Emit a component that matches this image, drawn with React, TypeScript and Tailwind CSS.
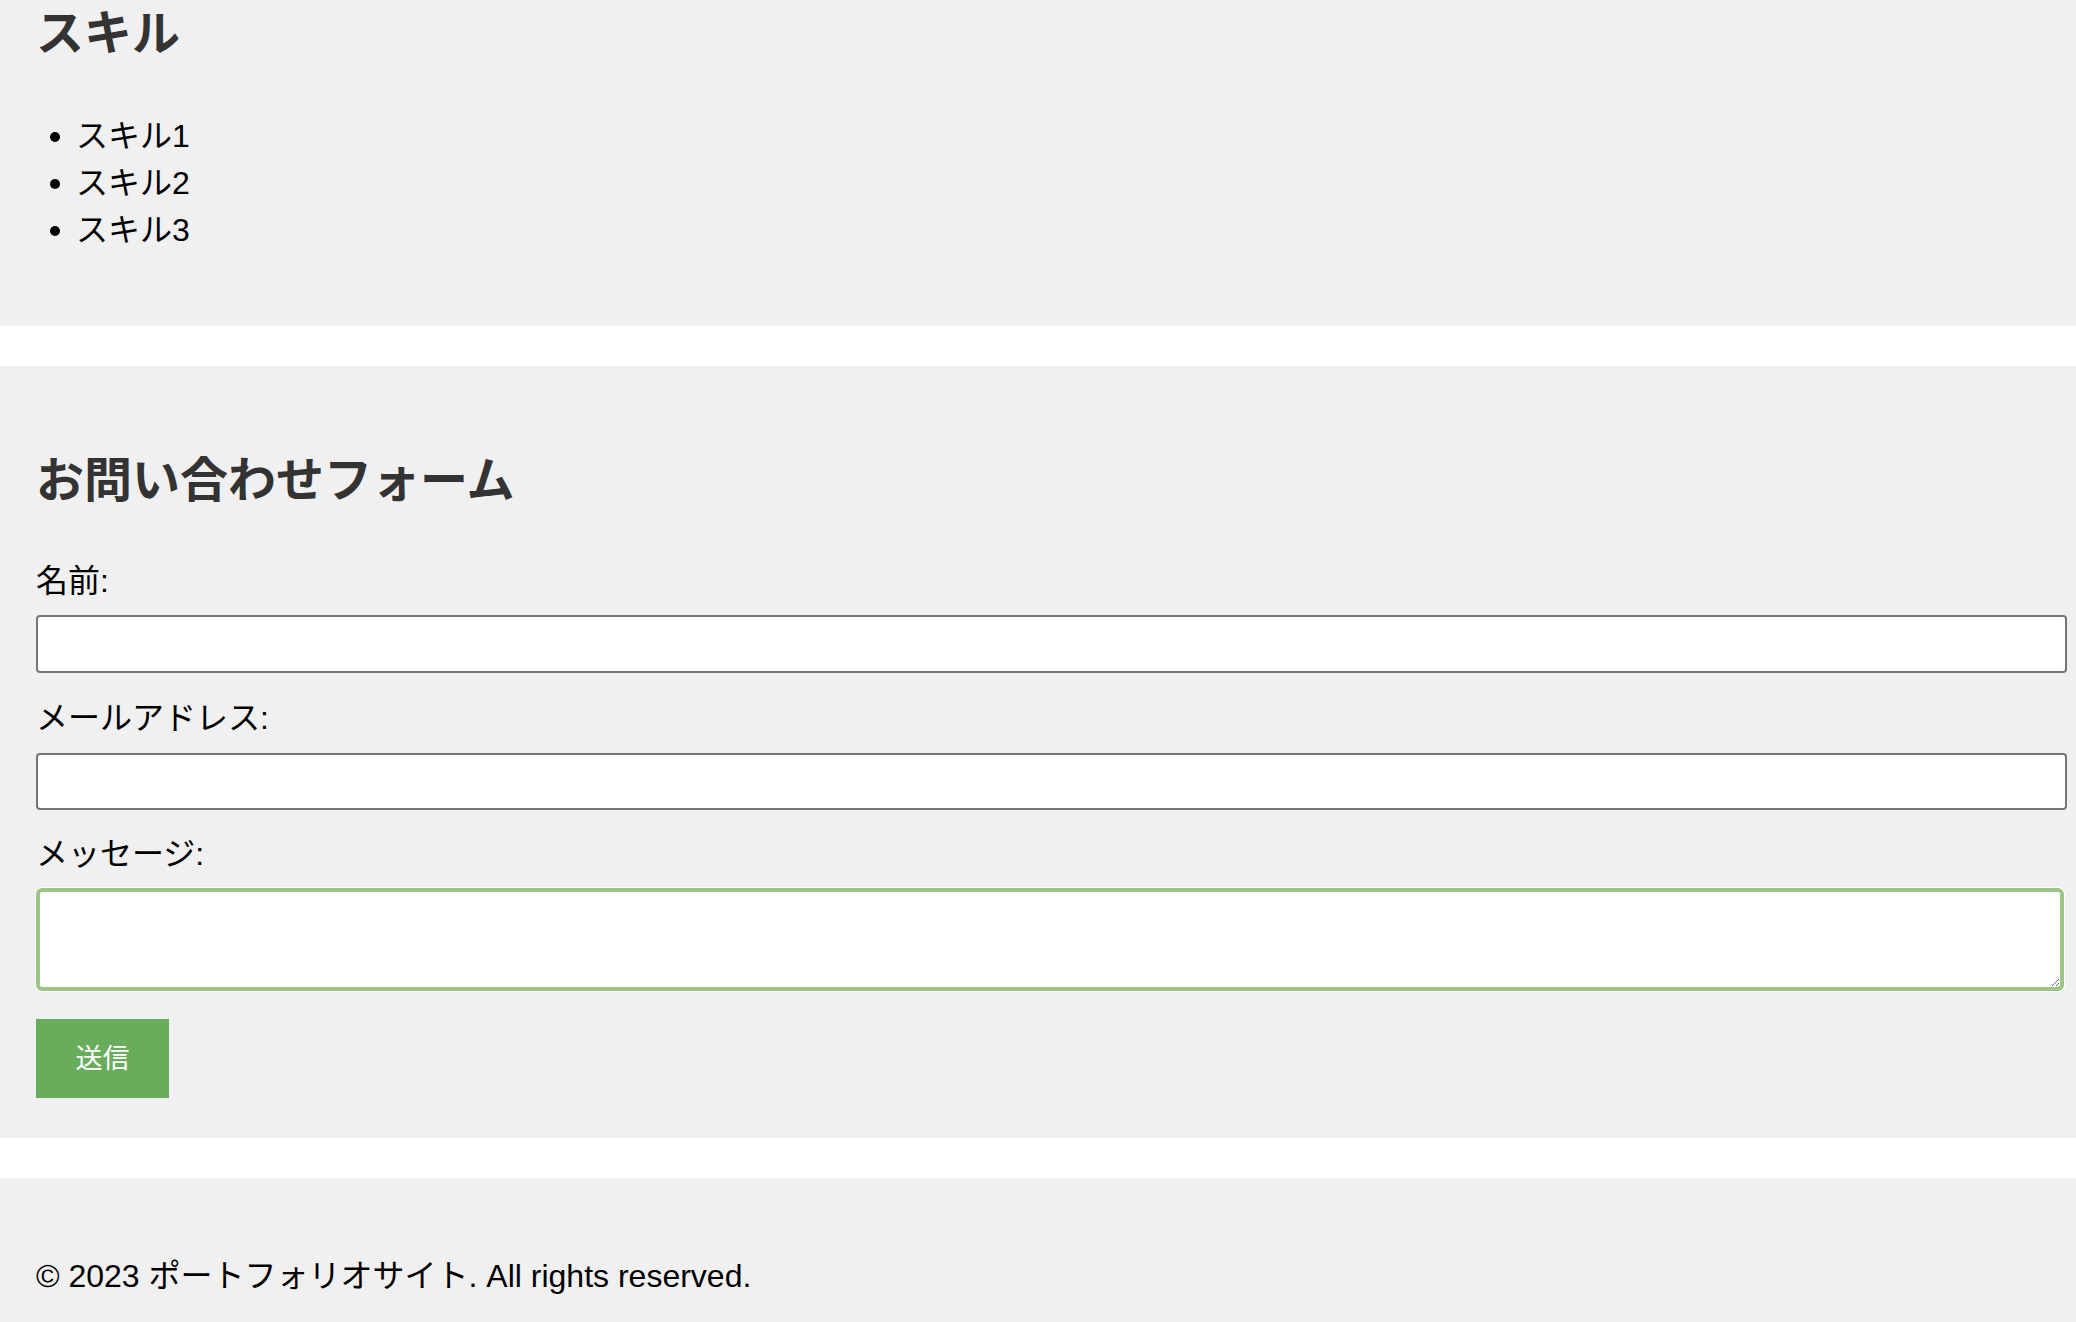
const font = "font-['Liberation_Sans','Noto_Sans_CJK_JP',sans-serif]";

const skills = ["スキル1", "スキル2", "スキル3"];

function Skills() {
  return (
    <section className="bg-[#f0f0f0] px-[36px] pb-[72px]">
      <h2 className="pt-[5px] text-[48px] leading-[58px] font-bold text-[#333333]">スキル</h2>
      <ul className="mt-[50px]">
        {skills.map((s) => (
          <li key={s} className="flex items-center gap-[16px] pl-[14px] text-[32px] leading-[47px] text-black">
            <span className="h-[10px] w-[10px] rounded-full bg-black" />
            {s}
          </li>
        ))}
      </ul>
    </section>
  );
}

function Field({ label, children }: { label: string; children: React.ReactNode }) {
  return (
    <div className="flex flex-col">
      <label className="text-[32px] leading-[48px] text-black">{label}</label>
      {children}
    </div>
  );
}

function ContactForm() {
  return (
    <section className="mt-[40px] bg-[#f0f0f0] px-[36px] pt-[40px] pb-[40px]">
      <h2 className="mt-[46px] text-[48px] leading-[58px] font-bold text-[#333333]">お問い合わせフォーム</h2>
      <form className="mt-[47px] flex flex-col" onSubmit={(e) => e.preventDefault()}>
        <Field label="名前:">
          <input
            type="text"
            className="mt-[10px] h-[58px] w-[2031px] rounded-[4px] border-2 border-[#767676] bg-white outline-none"
          />
        </Field>
        <div className="mt-[21px]">
          <Field label="メールアドレス:">
            <input
              type="email"
              className="mt-[11px] h-[57px] w-[2031px] rounded-[4px] border-2 border-[#767676] bg-white outline-none"
            />
          </Field>
        </div>
        <div className="mt-[20px]">
          <Field label="メッセージ:">
            <textarea className="mt-[10px] block h-[103px] w-[2028px] rounded-[6px] border-4 border-[#9bc687] bg-white shadow-[0_0_0_1px_#ffffff] outline-none" />
          </Field>
        </div>
        <button
          type="submit"
          className="mt-[28px] h-[79px] w-[133px] bg-[#67ad5c] text-[27px] leading-[32px] text-white"
        >
          送信
        </button>
      </form>
    </section>
  );
}

export default function App() {
  return (
    <div className={`${font} h-[1322px] overflow-hidden bg-white`}>
      <Skills />
      <ContactForm />
      <footer className="mt-[40px] h-[200px] bg-[#f0f0f0] px-[36px] pt-[74px]">
        <p className="text-[32px] leading-[48px] text-black">© 2023 ポートフォリオサイト. All rights reserved.</p>
      </footer>
    </div>
  );
}
